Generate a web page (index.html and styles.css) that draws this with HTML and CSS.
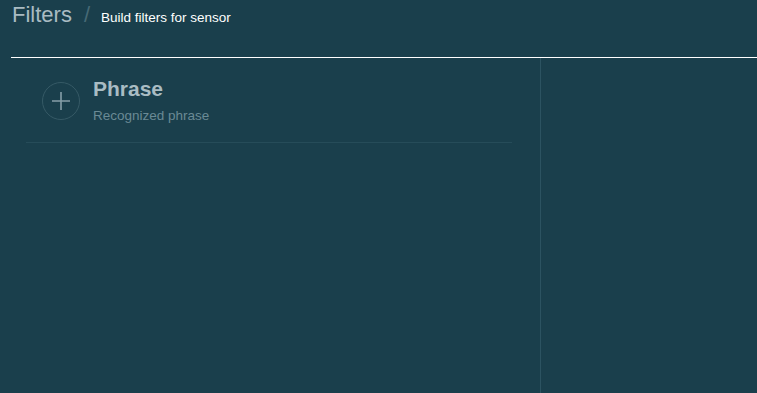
FILE: index.html
```html
<!DOCTYPE html>
<html lang="en">
<head>
<meta charset="utf-8">
<title>Filters</title>
<link rel="stylesheet" href="styles.css">
</head>
<body>
  <header class="head">
    <span class="title">Filters</span>
    <span class="sep">/</span>
    <span class="sub">Build filters for sensor</span>
  </header>
  <div class="rule"></div>
  <main class="panes">
    <section class="left">
      <div class="item">
        <div class="add">
          <svg width="38" height="38" viewBox="0 0 38 38">
            <circle cx="19" cy="19" r="18.5" fill="none" stroke="#365a66" stroke-width="1"/>
            <path d="M10 19 H28 M19 10 V28" stroke="#869fa8" stroke-width="1.6" fill="none"/>
          </svg>
        </div>
        <div class="text">
          <div class="name">Phrase</div>
          <div class="desc">Recognized phrase</div>
        </div>
      </div>
    </section>
    <section class="right"></section>
  </main>
</body>
</html>
```
FILE: styles.css
```css
html, body {
  margin: 0;
  padding: 0;
  height: 100%;
}
body {
  background: #1a3f4c;
  font-family: "Liberation Sans", Arial, sans-serif;
  overflow: hidden;
}
.head {
  display: flex;
  align-items: baseline;
  box-sizing: border-box;
  height: 57px;
  padding: 2px 0 0 12px;
}
.title {
  font-size: 22px;
  line-height: 26px;
  color: #a9bbc2;
}
.sep {
  font-size: 22px;
  line-height: 26px;
  color: #466975;
  margin: 0 11px 0 12px;
}
.sub {
  font-size: 13.5px;
  color: #ffffff;
}
.rule {
  height: 1px;
  margin-left: 11px;
  background: #ffffff;
}
.panes {
  display: flex;
  height: 335px;
}
.left {
  width: 540px;
  border-right: 1px solid #2c5361;
}
.right {
  flex: 1;
}
.item {
  display: flex;
  align-items: flex-start;
  width: 486px;
  margin-left: 26px;
  box-sizing: border-box;
  padding: 20px 0 18px 16px;
  border-bottom: 1px solid #264c59;
}
.add {
  width: 38px;
  height: 38px;
  margin-top: 4px;
  margin-right: 13px;
}
.add svg {
  display: block;
}
.name {
  font-size: 21px;
  line-height: 22px;
  font-weight: bold;
  color: #a9bcc3;
}
.desc {
  margin-top: 8px;
  font-size: 13.5px;
  line-height: 16px;
  color: #6a8a95;
}
```
